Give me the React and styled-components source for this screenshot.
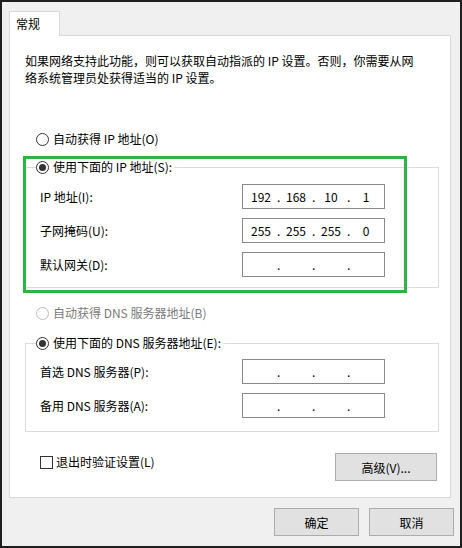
import React from 'react';
import styled, { createGlobalStyle } from 'styled-components';

const GlobalStyle = createGlobalStyle`
  html, body {
    margin: 0;
    padding: 0;
    background: #f0f0f0;
  }
  body {
    font-family: "Noto Sans CJK SC", "Noto Sans", sans-serif;
    font-size: 12px;
    color: #000;
  }
`;

const Window = styled.div`
  width: 462px;
  height: 548px;
  box-sizing: border-box;
  border: 2px solid #1f1f1f;
  background: #f0f0f0;
  padding: 9px 6px 0 7px;
  display: flex;
  flex-direction: column;
`;

const TabBar = styled.div`
  display: flex;
  margin-bottom: -1px;
`;

const Tab = styled.div`
  position: relative;
  z-index: 1;
  width: 51px;
  height: 25px;
  box-sizing: border-box;
  border: 1px solid #d9d9d9;
  border-bottom: none;
  background: #fff;
  padding-left: 6px;
  line-height: 24px;
`;

const Panel = styled.div`
  height: 463px;
  box-sizing: border-box;
  margin-right: 3px;
  border: 1px solid #d9d9d9;
  background: #fff;
  padding: 16px 11px 0 15px;
  display: flex;
  flex-direction: column;
`;

const Intro = styled.p`
  margin: 0;
  line-height: 17px;
`;

const OptionRow = styled.label`
  display: flex;
  align-items: center;
  gap: 4px;
  height: 16px;
  line-height: 16px;
  margin: ${(p) => p.$top || 0}px 0 0 11px;
  color: ${(p) => (p.$disabled ? '#7a7a7a' : '#000')};
`;

const Radio = styled.span`
  width: 13px;
  height: 13px;
  box-sizing: border-box;
  border-radius: 50%;
  border: 1px solid ${(p) => (p.$disabled ? '#bcbcbc' : '#333')};
  background: #fff;
  display: flex;
  align-items: center;
  justify-content: center;
  flex-shrink: 0;

  &::after {
    content: '';
    display: ${(p) => (p.$checked ? 'block' : 'none')};
    width: 7px;
    height: 7px;
    border-radius: 50%;
    background: #333;
  }
`;

const Section = styled.div`
  position: relative;
  margin-top: ${(p) => p.$top}px;
`;

const Highlight = styled.div`
  position: absolute;
  left: -2px;
  top: -3px;
  width: 384px;
  height: 137px;
  box-sizing: border-box;
  border: 3px solid #2db34a;
  pointer-events: none;
`;

const Group = styled.fieldset`
  margin: 0;
  min-width: 0;
  border: 1px solid #dcdcdc;
  padding: ${(p) => p.$padTop}px 12px ${(p) => p.$padBottom}px 10px;
  display: flex;
  flex-direction: column;
  gap: 9px;
`;

const Legend = styled.legend`
  padding: 0 2px 0 0;
  margin: 0;
`;

const LegendOption = styled.span`
  display: flex;
  align-items: center;
  gap: 4px;
  height: 16px;
  line-height: 16px;
`;

const FieldRow = styled.div`
  display: flex;
  align-items: center;
  height: 25px;
  padding-left: 4px;
`;

const FieldLabel = styled.span`
  width: 202px;
  flex-shrink: 0;
`;

const IpBox = styled.div`
  width: 143px;
  height: 25px;
  box-sizing: border-box;
  border: 1px solid #8a8a8a;
  background: #fff;
  display: flex;
  align-items: center;
  padding-left: 2px;
  line-height: 23px;
`;

const Octet = styled.span`
  width: 32px;
  text-align: center;
`;

const Dot = styled.span`
  width: 3px;
  text-align: center;
`;

const BottomRow = styled.div`
  display: flex;
  justify-content: space-between;
  align-items: flex-start;
  margin-top: 21px;
  padding-right: 2px;
`;

const CheckRow = styled.label`
  display: flex;
  align-items: center;
  gap: 3px;
  margin: 2px 0 0 15px;
  height: 14px;
  line-height: 14px;
`;

const CheckBox = styled.span`
  width: 13px;
  height: 13px;
  box-sizing: border-box;
  border: 1px solid #333;
  background: #fff;
`;

const Button = styled.button`
  width: ${(p) => p.$w}px;
  height: 28px;
  box-sizing: border-box;
  border: 1px solid #adadad;
  background: #e1e1e1;
  font-family: inherit;
  font-size: 12px;
  color: #000;
  padding: 0;
`;

const Footer = styled.div`
  display: flex;
  justify-content: flex-end;
  gap: 10px;
  margin-top: 10px;
`;

const IpField = ({ parts }) => (
  <IpBox>
    {parts.map((part, i) => (
      <React.Fragment key={i}>
        <Octet>{part}</Octet>
        {i < 3 && <Dot>.</Dot>}
      </React.Fragment>
    ))}
  </IpBox>
);

const Field = ({ label, parts }) => (
  <FieldRow>
    <FieldLabel>{label}</FieldLabel>
    <IpField parts={parts} />
  </FieldRow>
);

const empty = ['', '', '', ''];

const App = () => (
  <>
    <GlobalStyle />
    <Window>
      <TabBar>
        <Tab>常规</Tab>
      </TabBar>
      <Panel>
        <Intro>
          如果网络支持此功能，则可以获取自动指派的 IP 设置。否则，你需要从网
          <br />
          络系统管理员处获得适当的 IP 设置。
        </Intro>

        <OptionRow $top={45}>
          <Radio />
          自动获得 IP 地址(O)
        </OptionRow>

        <Section $top={12}>
          <Group $padTop={9} $padBottom={10}>
            <Legend>
              <LegendOption>
                <Radio $checked />
                使用下面的 IP 地址(S):
              </LegendOption>
            </Legend>
            <Field label="IP 地址(I):" parts={['192', '168', '10', '1']} />
            <Field label="子网掩码(U):" parts={['255', '255', '255', '0']} />
            <Field label="默认网关(D):" parts={empty} />
          </Group>
          <Highlight />
        </Section>

        <OptionRow $top={17} $disabled>
          <Radio $disabled />
          自动获得 DNS 服务器地址(B)
        </OptionRow>

        <Section $top={14}>
          <Group $padTop={8} $padBottom={13}>
            <Legend>
              <LegendOption>
                <Radio $checked />
                使用下面的 DNS 服务器地址(E):
              </LegendOption>
            </Legend>
            <Field label="首选 DNS 服务器(P):" parts={empty} />
            <Field label="备用 DNS 服务器(A):" parts={empty} />
          </Group>
        </Section>

        <BottomRow>
          <CheckRow>
            <CheckBox />
            退出时验证设置(L)
          </CheckRow>
          <Button $w={102}>高级(V)...</Button>
        </BottomRow>
      </Panel>
      <Footer>
        <Button $w={85}>确定</Button>
        <Button $w={85}>取消</Button>
      </Footer>
    </Window>
  </>
);

export default App;
